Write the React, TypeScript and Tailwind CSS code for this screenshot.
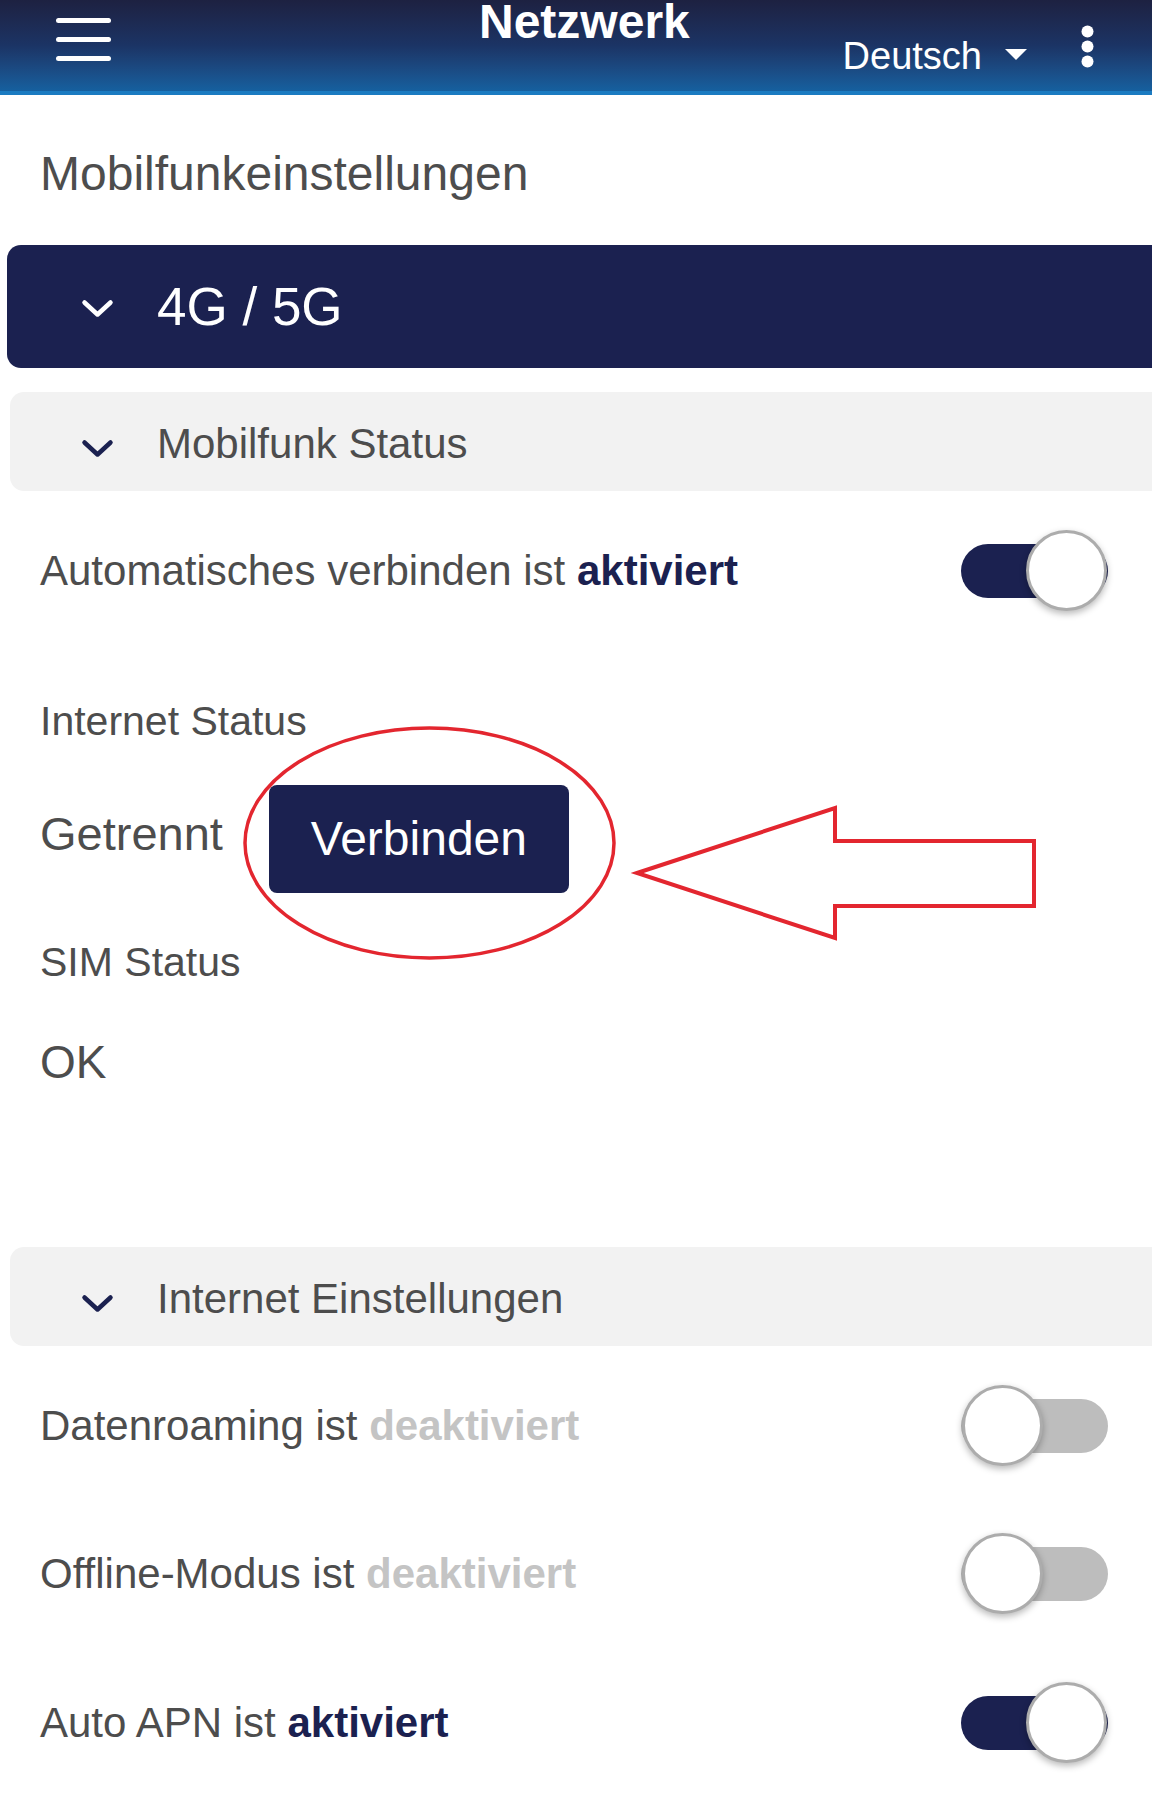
import React from "react";

function Chevron({ color }: { color: string }) {
  return (
    <svg width="33" height="19" viewBox="0 0 33 19" className="block">
      <polyline
        points="3.5,3.5 16.5,15.5 29.5,3.5"
        fill="none"
        stroke={color}
        strokeWidth="4.5"
        strokeLinecap="round"
        strokeLinejoin="round"
      />
    </svg>
  );
}

function Toggle({ on }: { on: boolean }) {
  return (
    <div className="relative flex h-[81px] w-[147px] shrink-0 items-center">
      <div
        className={
          on
            ? "h-[54px] w-full rounded-full bg-[#1b2150]"
            : "h-[54px] w-full rounded-full bg-[#bdbdbd]"
        }
      />
      <div
        className={
          on
            ? "absolute right-[1px] top-0 h-[81px] w-[81px] rounded-full border-[3px] border-[#acacac] bg-white shadow-[0_3px_7px_rgba(0,0,0,0.28)]"
            : "absolute left-[1px] top-0 h-[81px] w-[81px] rounded-full border-[3px] border-[#acacac] bg-white shadow-[0_3px_7px_rgba(0,0,0,0.28)]"
        }
      />
    </div>
  );
}

function SubBar({ title, mt }: { title: string; mt: string }) {
  return (
    <div
      className={`${mt} ml-[10px] flex h-[99px] w-[1160px] items-center rounded-[14px] bg-[#f2f2f2]`}
    >
      <div className="ml-[71px] mt-[14px]">
        <Chevron color="#1b2150" />
      </div>
      <span className="ml-[43px] mt-[4px] text-[42px] leading-[50px] text-[#4d4d4d]">{title}</span>
    </div>
  );
}

function ToggleRow({
  label,
  state,
  on,
  mt,
}: {
  label: string;
  state: string;
  on: boolean;
  mt: string;
}) {
  return (
    <div className={`${mt} flex h-[81px] items-center justify-between pl-[40px] pr-[44px]`}>
      <span className="text-[42px] leading-[50px] text-[#4d4d4d]">
        {label}{" "}
        <span className={on ? "font-bold text-[#1b2150]" : "font-bold text-[#c4c4c4]"}>{state}</span>
      </span>
      <Toggle on={on} />
    </div>
  );
}

export default function App() {
  return (
    <div className="relative min-h-[1820px] w-full overflow-hidden bg-white font-['Liberation_Sans',Arial,sans-serif]">
      {/* Header */}
      <header className="flex h-[95px] items-start border-b-[4px] border-[#1b7bc1] bg-linear-to-b from-[#1d2141] via-[#1b3465] to-[#15609f]">
        <div className="ml-[56px] mt-[18px] flex w-[55px] flex-col gap-[14px]">
          <div className="h-[5px] w-full rounded-full bg-white" />
          <div className="h-[5px] w-full rounded-full bg-white" />
          <div className="h-[5px] w-full rounded-full bg-white" />
        </div>
        <h1 className="ml-[368px] text-[48px] font-bold leading-[44px] text-white">Netzwerk</h1>
        <div className="ml-auto mr-[58px] flex items-start">
          <span className="mt-[37px] text-[38px] leading-[38px] text-white">Deutsch</span>
          <svg width="22" height="11" viewBox="0 0 22 11" className="ml-[23px] mt-[49px] block">
            <polygon points="0,0 22,0 11,11" fill="#ffffff" />
          </svg>
          <svg width="13" height="43" viewBox="0 0 13 43" className="ml-[54px] mt-[25px] block">
            <circle cx="6.5" cy="6.5" r="6" fill="#ffffff" />
            <circle cx="6.5" cy="21.5" r="6" fill="#ffffff" />
            <circle cx="6.5" cy="36.5" r="6" fill="#ffffff" />
          </svg>
        </div>
      </header>

      {/* Section title */}
      <h2 className="ml-[40px] mt-[51px] text-[48px] leading-[56px] text-[#4d4d4d]">Mobilfunkeinstellungen</h2>

      {/* 4G / 5G bar */}
      <div className="ml-[7px] mt-[43px] flex h-[123px] w-[1160px] items-center rounded-[14px] bg-[#1b2150]">
        <div className="ml-[74px] mt-[3px]">
          <Chevron color="#ffffff" />
        </div>
        <span className="ml-[43px] text-[53px] leading-[60px] text-white">4G / 5G</span>
      </div>

      <SubBar title="Mobilfunk Status" mt="mt-[24px]" />

      <ToggleRow label="Automatisches verbinden ist" state="aktiviert" on={true} mt="mt-[39px]" />

      <div className="ml-[40px] mt-[85px] text-[41px] leading-[50px] text-[#4d4d4d]">Internet Status</div>

      <div className="ml-[40px] mt-[39px] flex items-center">
        <span className="mb-[10px] text-[47px] leading-[56px] text-[#4d4d4d]">Getrennt</span>
        <button className="ml-[46px] flex h-[108px] w-[300px] items-center justify-center rounded-[8px] bg-[#1b2150] text-[48px] leading-[56px] text-white">
          Verbinden
        </button>
      </div>

      <div className="ml-[40px] mt-[44px] text-[41px] leading-[50px] text-[#4d4d4d]">SIM Status</div>

      <div className="ml-[40px] mt-[50px] text-[46px] leading-[50px] text-[#4d4d4d]">OK</div>

      <SubBar title="Internet Einstellungen" mt="mt-[160px]" />

      <ToggleRow label="Datenroaming ist" state="deaktiviert" on={false} mt="mt-[39px]" />
      <ToggleRow label="Offline-Modus ist" state="deaktiviert" on={false} mt="mt-[67px]" />
      <ToggleRow label="Auto APN ist" state="aktiviert" on={true} mt="mt-[68px]" />

      {/* Red annotation overlay */}
      <svg
        width="1152"
        height="1820"
        viewBox="0 0 1152 1820"
        className="pointer-events-none absolute left-0 top-0"
      >
        <ellipse cx="429.5" cy="843" rx="184.5" ry="115" fill="none" stroke="#e3262f" strokeWidth="3.5" />
        <polygon
          points="637,873 835,808 835,841 1034,841 1034,906 835,906 835,938"
          fill="none"
          stroke="#e3262f"
          strokeWidth="4"
          strokeLinejoin="miter"
        />
      </svg>
    </div>
  );
}
